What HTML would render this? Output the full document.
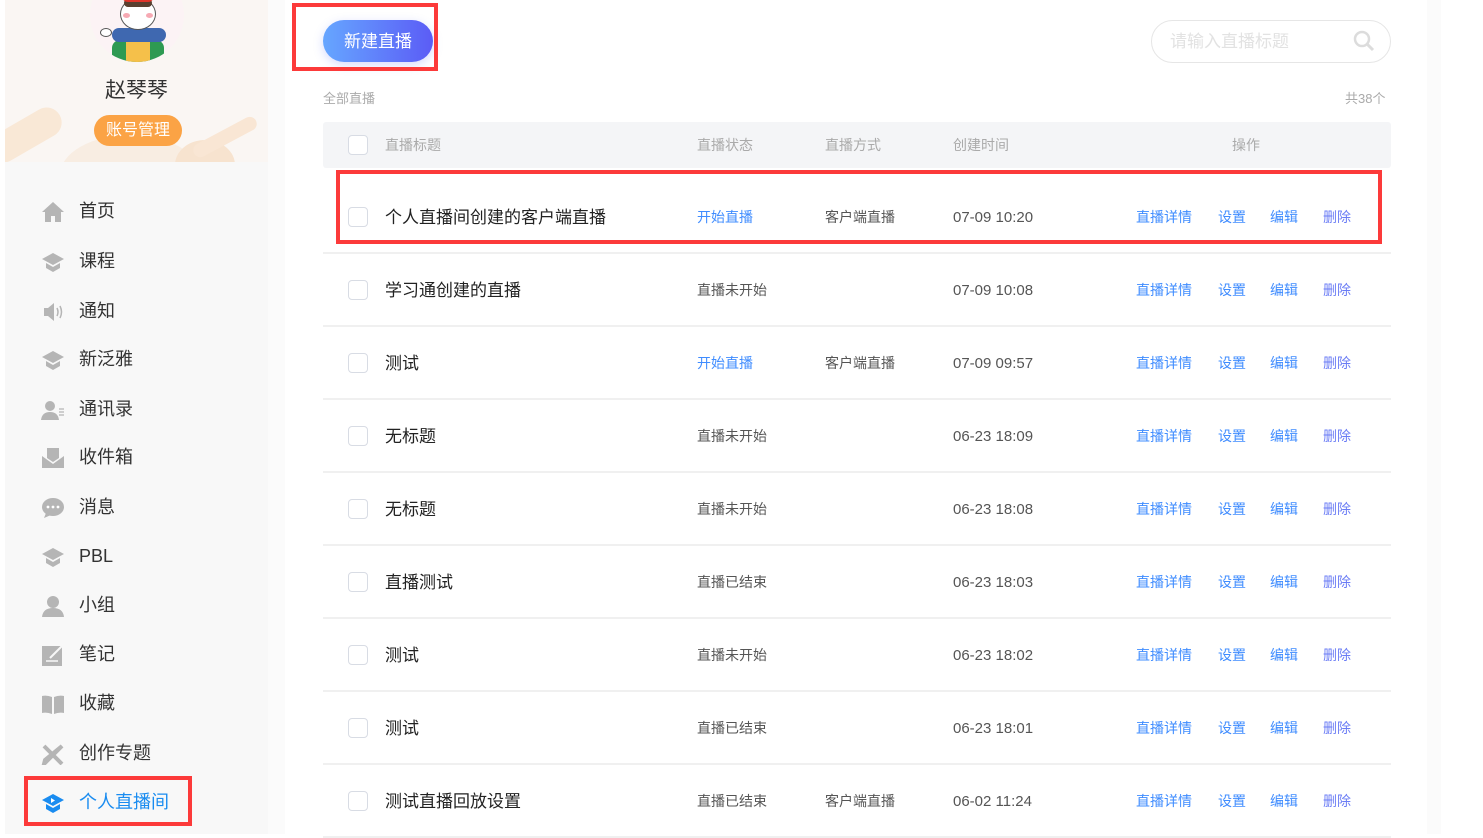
<!DOCTYPE html>
<html><head><meta charset="utf-8"><style>
*{margin:0;padding:0;box-sizing:border-box}
body{width:1483px;height:834px;overflow:hidden;background:#fff;font-family:"Liberation Sans","Noto Sans CJK SC",sans-serif;position:relative}
.abs{position:absolute}
#side{left:5px;top:0;width:263px;height:834px;background:#f8f8f8}
#prof{left:5px;top:0;width:263px;height:162px;background:#faf6f3;overflow:hidden}
.nav{position:absolute;left:0;width:263px;height:30px}
.nav .ic{position:absolute;left:36px;top:5px;width:24px;height:22px}
.nav .t{position:absolute;left:74px;top:3px;font-size:18px;color:#333;line-height:24px}
.red{position:absolute;border:4px solid #fc3a3a}
.cb{position:absolute;left:348px;width:20px;height:20px;border:1.5px solid #d8dce4;border-radius:4px;background:#fff}
.row{position:absolute;left:323px;width:1068px;height:73px;border-bottom:2px solid #f0f0f0}
.c{position:absolute;font-size:14px;line-height:20px;color:#555}
.blue{color:#3f8cff}
.ttl{font-size:17px;color:#222}
</style></head><body>
<div id="side" class="abs"></div>
<div id="prof" class="abs">
 <div class="abs" style="left:-20px;top:120px;width:80px;height:30px;border-radius:15px;background:#f9e8d6;transform:rotate(-30deg)"></div>
 <div class="abs" style="left:55px;top:135px;width:140px;height:80px;border-radius:50%;background:#f8ede2"></div>
 <div class="abs" style="left:170px;top:140px;width:60px;height:50px;border-radius:50%;background:#f7e3cf"></div>
 <div class="abs" style="left:185px;top:130px;width:70px;height:14px;border-radius:7px;background:#f9e6d4;transform:rotate(-28deg)"></div>
 <div class="abs" style="left:85px;top:-32px;width:94px;height:94px;border-radius:50%;background:#fcf3f5;overflow:hidden">
  <div class="abs" style="left:22px;top:72px;width:52px;height:30px;background:#2e9a52;border-radius:8px 8px 0 0"></div>
  <div class="abs" style="left:36px;top:72px;width:24px;height:30px;background:#f5c04a"></div>
  <div class="abs" style="left:22px;top:60px;width:54px;height:14px;background:#3f68b0;border-radius:7px"></div>
  <div class="abs" style="left:30px;top:30px;width:36px;height:32px;border-radius:50%;background:#fff;border:1.5px solid #555"></div>
  <div class="abs" style="left:34px;top:31px;width:28px;height:8px;border-radius:4px;background:#5a4030"></div>
  <div class="abs" style="left:33px;top:45px;width:7px;height:5px;border-radius:50%;background:#f6a9b3"></div>
  <div class="abs" style="left:56px;top:45px;width:7px;height:5px;border-radius:50%;background:#f6a9b3"></div>
  <div class="abs" style="left:32px;top:22px;width:32px;height:12px;border-radius:8px;background:#e0352b"></div>
  <div class="abs" style="left:10px;top:60px;width:12px;height:9px;border-radius:50%;background:#fff;border:1.5px solid #555"></div>
 </div>
 <div class="abs" style="left:0;top:74px;width:263px;text-align:center;font-size:21px;color:#333">赵琴琴</div>
 <div class="abs" style="left:89px;top:115px;width:88px;height:31px;border-radius:16px;background:#fba345;color:#fff;font-size:16px;text-align:center;line-height:31px">账号管理</div>
</div>

<div class="abs" style="left:5px;top:0">
<div class="nav" style="top:196px"><svg class="ic" viewBox="0 0 24 22"><path d="M12 1L1 11h3v10h6v-6h4v6h6V11h3z" fill="#b5b5b5"/></svg><div class="t">首页</div></div>
<div class="nav" style="top:246px"><svg class="ic" viewBox="0 0 24 22"><path d="M12 2L1 8l11 6 11-6zM5 12v5l7 4 7-4v-5l-7 4z" fill="#b5b5b5"/></svg><div class="t">课程</div></div>
<div class="nav" style="top:296px"><svg class="ic" viewBox="0 0 24 22"><path d="M3 7h4l6-5v18l-6-5H3z" fill="#b5b5b5"/><path d="M16 7q2 4 0 8M19 5q3 6 0 12" stroke="#b5b5b5" stroke-width="1.5" fill="none"/></svg><div class="t">通知</div></div>
<div class="nav" style="top:344px"><svg class="ic" viewBox="0 0 24 22"><path d="M12 2L1 8l11 6 11-6zM5 12v5l7 4 7-4v-5l-7 4z" fill="#b5b5b5"/></svg><div class="t">新泛雅</div></div>
<div class="nav" style="top:394px"><svg class="ic" viewBox="0 0 24 22"><circle cx="9" cy="7" r="5" fill="#b5b5b5"/><path d="M0 21q1-8 9-8t9 8z" fill="#b5b5b5"/><path d="M18 10h5M18 13h5M18 16h5" stroke="#b5b5b5" stroke-width="1.3"/></svg><div class="t">通讯录</div></div>
<div class="nav" style="top:442px"><svg class="ic" viewBox="0 0 24 22"><path d="M6 1h12v10l-6 4-6-4z" fill="#b5b5b5"/><path d="M1 9l11 8 11-8v12H1z" fill="#b5b5b5"/></svg><div class="t">收件箱</div></div>
<div class="nav" style="top:492px"><svg class="ic" viewBox="0 0 24 22"><ellipse cx="12" cy="10" rx="11" ry="9" fill="#b5b5b5"/><path d="M5 16l-2 5 7-3z" fill="#b5b5b5"/><circle cx="7" cy="10" r="1.4" fill="#fff"/><circle cx="12" cy="10" r="1.4" fill="#fff"/><circle cx="17" cy="10" r="1.4" fill="#fff"/></svg><div class="t">消息</div></div>
<div class="nav" style="top:541px"><svg class="ic" viewBox="0 0 24 22"><path d="M12 2L1 8l11 6 11-6zM5 12v5l7 4 7-4v-5l-7 4z" fill="#b5b5b5"/></svg><div class="t">PBL</div></div>
<div class="nav" style="top:590px"><svg class="ic" viewBox="0 0 24 22"><circle cx="12" cy="7" r="6" fill="#b5b5b5"/><path d="M1 22q1-9 11-9t11 9z" fill="#b5b5b5"/></svg><div class="t">小组</div></div>
<div class="nav" style="top:639px"><svg class="ic" viewBox="0 0 24 22"><rect x="1" y="2" width="20" height="20" fill="#b5b5b5"/><path d="M9 14l12-12" stroke="#f8f8f8" stroke-width="2"/><path d="M5 17h12" stroke="#f8f8f8" stroke-width="1.5"/></svg><div class="t">笔记</div></div>
<div class="nav" style="top:688px"><svg class="ic" viewBox="0 0 24 22"><path d="M1 3q5-1 10 1v17q-5-2-10-1zM13 4q5-2 10-1v17q-5-1-10 1z" fill="#b5b5b5"/></svg><div class="t">收藏</div></div>
<div class="nav" style="top:738px"><svg class="ic" viewBox="0 0 24 22"><path d="M3 3l18 18M21 3L6 18l-3 3 1-4z" stroke="#b5b5b5" stroke-width="4"/></svg><div class="t">创作专题</div></div>
<div class="nav" style="top:787px"><svg class="ic" viewBox="0 0 24 22"><path d="M12 2L1 8l11 6 11-6zM5 12v5l7 4 7-4v-5l-7 4z" fill="#1a8cf0"/><path d="M10 6v5l4-2.5z" fill="#fff"/></svg><div class="t" style="color:#1a8cf0">个人直播间</div></div>
</div>
<div class="red" style="left:24px;top:776px;width:168px;height:50px"></div>

<div class="abs" style="left:268px;top:0;width:17px;height:834px;background:#fbfbfb"></div>
<div class="abs" style="left:1427px;top:0;width:14px;height:834px;background:#fbfbfb"></div>

<div class="abs" style="left:323px;top:20px;width:110px;height:42px;border-radius:21px;background:linear-gradient(90deg,#66a6ff,#5b5cf6);box-shadow:0 3px 10px rgba(90,110,250,.25);color:#fff;font-size:17px;text-align:center;line-height:44px">新建直播</div>
<div class="red" style="left:292px;top:3px;width:146px;height:68px"></div>
<div class="abs" style="left:1151px;top:20px;width:240px;height:43px;border:1.5px solid #e6e6e6;border-radius:22px;font-size:17px;color:#e2e2e2;padding-left:18px;line-height:42px">请输入直播标题
<svg class="abs" style="left:201px;top:9px" width="22" height="22" viewBox="0 0 22 22"><circle cx="9" cy="9" r="7" stroke="#dcdcdc" stroke-width="2.5" fill="none"/><path d="M14 14l6 6" stroke="#dcdcdc" stroke-width="3"/></svg></div>
<div class="c" style="left:323px;top:89px;color:#aaa;font-size:13px">全部直播</div>
<div class="c" style="left:1345px;top:89px;color:#aaa;font-size:13px">共38个</div>

<div class="abs" style="left:323px;top:122px;width:1068px;height:46px;background:#f4f5f7;border-radius:3px"></div>
<div class="cb" style="top:135px"></div>
<div class="c" style="left:385px;top:135px;color:#aaa">直播标题</div>
<div class="c" style="left:697px;top:135px;color:#aaa">直播状态</div>
<div class="c" style="left:825px;top:135px;color:#aaa">直播方式</div>
<div class="c" style="left:953px;top:135px;color:#aaa">创建时间</div>
<div class="c" style="left:1232px;top:135px;color:#aaa">操作</div>

<div id="rows"></div>
<script>
var d=[["个人直播间创建的客户端直播","开始直播","客户端直播","07-09 10:20"],["学习通创建的直播","直播未开始","","07-09 10:08"],["测试","开始直播","客户端直播","07-09 09:57"],["无标题","直播未开始","","06-23 18:09"],["无标题","直播未开始","","06-23 18:08"],["直播测试","直播已结束","","06-23 18:03"],["测试","直播未开始","","06-23 18:02"],["测试","直播已结束","","06-23 18:01"],["测试直播回放设置","直播已结束","客户端直播","06-02 11:24"]];
var h="";d.forEach(function(r,i){var y=217+73*i;
h+='<div class="row" style="top:'+(y-36)+'px"></div><div class="cb" style="top:'+(y-10)+'px"></div>'+
'<div class="c ttl" style="left:385px;top:'+(y-9)+'px">'+r[0]+'</div>'+
'<div class="c'+(r[1]=="开始直播"?' blue':'')+'" style="left:697px;top:'+(y-10)+'px">'+r[1]+'</div>'+
'<div class="c" style="left:825px;top:'+(y-10)+'px">'+r[2]+'</div>'+
'<div class="c" style="left:953px;top:'+(y-9)+'px;font-size:15px">'+r[3]+'</div>'+
'<div class="c blue" style="left:1136px;top:'+(y-10)+'px">直播详情</div><div class="c blue" style="left:1218px;top:'+(y-10)+'px">设置</div><div class="c blue" style="left:1270px;top:'+(y-10)+'px">编辑</div><div class="c blue" style="left:1323px;top:'+(y-10)+'px;color:#6a7cf5">删除</div>';});
document.getElementById("rows").innerHTML=h;
</script>
<div class="red" style="left:336px;top:170px;width:1046px;height:74px;background:transparent"></div>
</body></html>
